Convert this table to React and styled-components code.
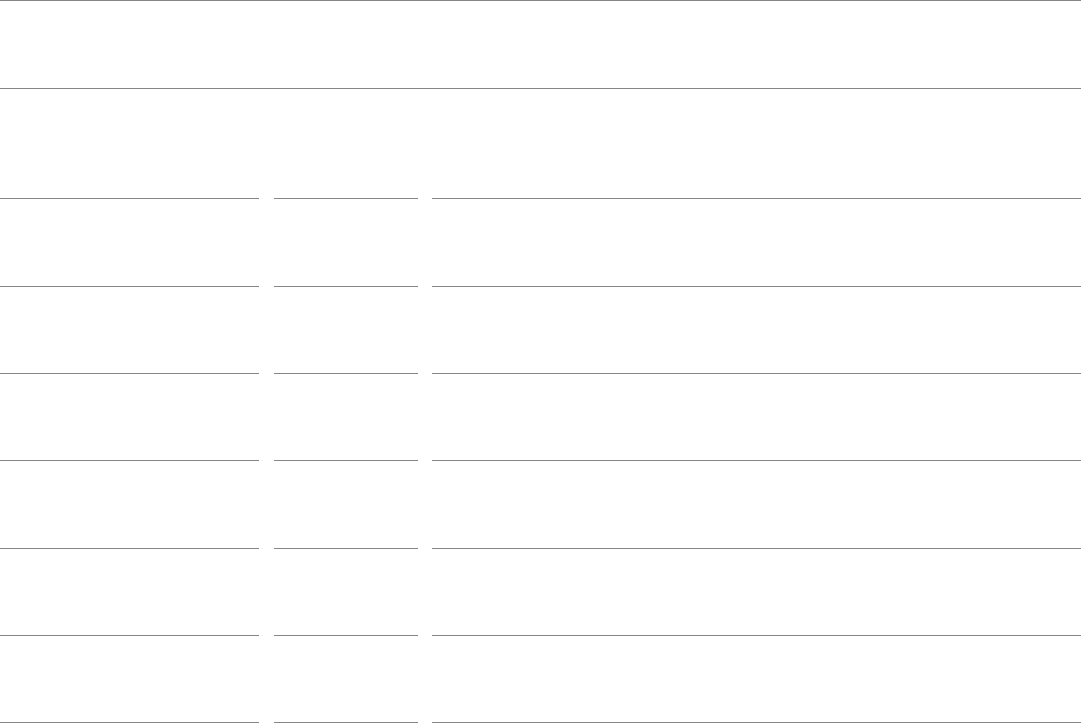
import React from 'react'
import styled, { createGlobalStyle } from 'styled-components';

const Global = createGlobalStyle`
  html, body {
    margin: 0;
    padding: 0;
    background: #ffffff;
    font-family: "Liberation Sans", Arial, sans-serif;
  }
`;

const Page = styled.div`
  width: 1081px;
  height: 723px;
  overflow: hidden;
  display: flex;
  flex-direction: column;
`;

const Header = styled.div`
  height: 87px;
  border-top: 1px solid #868686;
  border-bottom: 1px solid #868686;
  margin-bottom: 22px;
`;

const Grid = styled.div`
  display: grid;
  grid-template-columns: 274px 158px 1fr;
  grid-template-rows: 88px 88px 87px 87px 88px 87px 87px;
`;

const Cell = styled.div`
  margin-right: ${props => props.$gap || 0}px;
  border-bottom: 1px solid #868686;
`;

const rows = [0, 1, 2, 3, 4, 5, 6];

const App = () => (
  <>
    <Global />
    <Page>
      <Header />
      <Grid>
        {rows.map(r => (
          <React.Fragment key={`row-${r}`}>
            <Cell $gap={15} />
            <Cell $gap={14} />
            <Cell />
          </React.Fragment>
        ))}
      </Grid>
    </Page>
  </>
)

export default App
